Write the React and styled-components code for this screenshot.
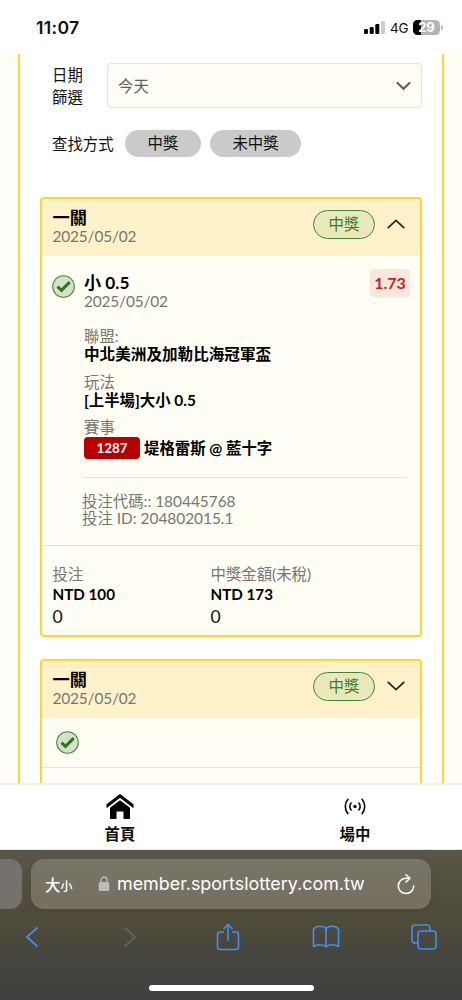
import React from "react";
import styled, { createGlobalStyle } from "styled-components";

const GlobalStyle = createGlobalStyle`
  * {
    box-sizing: border-box;
  }

  body {
    margin: 0;
    background: #fff;
    color: #111;
    font-family: Lato, "Noto Sans CJK TC", sans-serif;
    font-size: 15.4px;
  }

  svg {
    display: block;
    flex: none;
  }
`;

const Screen = styled.div`
  display: flex;
  flex-direction: column;
  width: 462px;
  height: 1000px;
  overflow: hidden;
`;

const StatusBar = styled.header`
  display: flex;
  align-items: center;
  justify-content: space-between;
  height: 54px;
  padding: 1px 19px 0 36px;
  background: #fff;
  font-family: Inter, sans-serif;
`;

const Time = styled.div`
  font-size: 17.6px;
  font-weight: 600;
  letter-spacing: 0.3px;
`;

const StatusIcons = styled.div`
  display: flex;
  align-items: center;
`;

const Network = styled.span`
  width: 18px;
  margin: 0 5px;
  font-size: 13.5px;
  font-weight: 400;
  letter-spacing: -0.3px;
  white-space: nowrap;
`;

const Battery = styled.div`
  width: 27px;
  height: 15px;
  border-radius: 4.5px;
  background: linear-gradient(90deg, #000 8px, #b4b4b4 8px);
  color: #fff;
  font-size: 13px;
  font-weight: 700;
  line-height: 15px;
  text-align: center;
`;

const BatteryTip = styled.div`
  width: 2px;
  height: 5px;
  margin-left: 1px;
  border-radius: 0 2px 2px 0;
  background: #b9b9b9;
`;

const Page = styled.main`
  flex: none;
  height: 729px;
  padding: 0 18px;
  overflow: hidden;
  background: #fffdf4;
`;

const Panel = styled.div`
  height: 760px;
  padding: 9px 20px 0;
  border: solid #ffd629;
  border-width: 0 2px;
  background: #fff;
`;

const DateFilter = styled.div`
  display: flex;
  align-items: center;
  height: 45px;
  padding-left: 12px;
`;

const DateLabel = styled.div`
  width: 55px;
  padding-right: 20px;
  line-height: 22px;
`;

const Select = styled.div`
  display: flex;
  flex: 1;
  align-items: center;
  justify-content: space-between;
  height: 45px;
  padding: 0 10px 2px;
  border: 1px solid #e3e2dc;
  border-radius: 4px;
  background: #fffdf4;
  color: #60605c;

  svg {
    margin-top: 4px;
  }
`;

const ModeFilter = styled.div`
  display: flex;
  align-items: center;
  gap: 9px;
  height: 27px;
  margin: 22px 0 40px;
  padding-left: 12px;
`;

const ModeLabel = styled.span`
  width: 64px;
  padding-bottom: 2px;
`;

const Chip = styled.span`
  width: ${(props) => props.$width}px;
  border-radius: 14px;
  background: #cacaca;
  line-height: 27px;
  text-align: center;
`;

const Card = styled.section`
  height: ${(props) => props.$height}px;
  margin-bottom: 22px;
  overflow: hidden;
  border: 2px solid #ffd629;
  border-radius: 4px;
  background: #fffdf4;
`;

const CardHeader = styled.div`
  display: flex;
  align-items: center;
  height: 57px;
  padding: 0 15px 0 10.5px;
  background: #fff2cb;
`;

const Heading = styled.div`
  flex: 1;
  padding-bottom: 2px;
`;

const Title = styled.div`
  height: 20px;
  color: #000;
  font-size: 17.2px;
  font-weight: 700;
  line-height: 20px;
`;

const Muted = styled.div`
  height: 18px;
  color: #777671;
  line-height: 18px;
`;

const SlipDate = styled(Muted)`
  height: 17px;
  letter-spacing: -0.15px;
  line-height: 17px;
`;

const WinBadge = styled.span`
  width: 62px;
  height: 29px;
  margin: -7px 12px 0 0;
  border: 1px solid #3f8737;
  border-radius: 15px;
  background: #eae7ba;
  color: #37812c;
  line-height: 27px;
  text-align: center;
`;

const ArrowBox = styled.div`
  margin-top: -8px;
`;

const CardBody = styled.div`
  display: flex;
  height: 289px;
  padding: 17px 10px 0;
`;

const Status = styled.div`
  width: 32px;
  padding-top: 2px;
`;

const Details = styled.div`
  flex: 1;
`;

const Pick = styled.div`
  display: flex;
  justify-content: space-between;
  height: 38px;
  margin-bottom: 16px;
`;

const Odds = styled.span`
  width: 40px;
  height: 28px;
  margin-top: -4px;
  border-radius: 4px;
  background: #f8e7df;
  color: #c1281e;
  font-size: 16px;
  font-weight: 700;
  line-height: 28px;
  text-align: center;
`;

const Field = styled.div`
  margin-bottom: 8.5px;
`;

const Value = styled.div`
  display: flex;
  align-items: center;
  height: ${(props) => props.$height || 19}px;
  color: #000;
  font-size: ${(props) => props.$size || 15.6}px;
  font-weight: 700;
  line-height: 19px;
  white-space: pre;
`;

const MatchNumber = styled.span`
  width: 56px;
  height: 22px;
  margin-right: 4px;
  border-radius: 4px;
  background: #b90000;
  color: #fff;
  font-size: 13.4px;
  line-height: 22px;
  text-align: center;
`;

const Codes = styled.div`
  margin: 17px 3px 0 0;
  padding-top: 15px;
  border-top: 1px solid #e4e2da;
  color: #777671;
  line-height: 17px;

  div {
    margin-left: -2px;
  }
`;

const Totals = styled.div`
  display: flex;
  padding: 19px 10px 0 10.5px;
  border-top: 1px solid #e6e4dd;
`;

const Total = styled.div`
  width: 158px;
`;

const Points = styled.div`
  height: 20px;
  margin-top: 1px;
  color: #111;
  font-size: 17.6px;
  line-height: 20px;
`;

const CollapsedBody = styled.div`
  height: 50px;
  padding: 13px 14px 0;
  border-bottom: 1px solid #e6e4dd;
`;

const TabBar = styled.nav`
  display: grid;
  grid-template-columns: 235px 235px;
  height: 67px;
  padding-left: 2.5px;
  border-top: 2px solid #efefed;
  border-bottom: 1px solid #e5e5e5;
  background: #fff;
`;

const Tab = styled.div`
  display: flex;
  flex-direction: column;
  align-items: center;
  padding-top: 8px;
  color: #111;
  font-weight: 700;
  line-height: 20px;

  svg {
    margin-bottom: 4px;
  }
`;

const Browser = styled.footer`
  flex: 1;
  padding-top: 9px;
  background: linear-gradient(#5a5749 0, #4f4c3b 56px, #4e4b39 76px, #444440 110px, #40403f 150px);
`;

const AddressRow = styled.div`
  display: flex;
  gap: 9px;
  height: 50px;
`;

const PreviousTab = styled.div`
  width: 22px;
  border-radius: 0 12px 12px 0;
  background: #74726a;
`;

const AddressBar = styled.div`
  display: flex;
  align-items: center;
  width: 400px;
  padding: 0 16px 0 14px;
  border-radius: 13px;
  background: linear-gradient(#777568, #757060);
  box-shadow: 0 1px 8px rgba(0, 0, 0, 0.08);
  color: #fff;
  font-family: Inter, "Noto Sans CJK TC", sans-serif;
`;

const TextSize = styled.span`
  width: 53px;
  font-size: 15.4px;
  font-weight: 500;

  small {
    font-size: 12px;
  }
`;

const Address = styled.span`
  flex: 1;
  margin-left: 7px;
  padding-bottom: 1px;
  font-size: 17.9px;
  white-space: nowrap;
`;

const Toolbar = styled.div`
  display: flex;
  align-items: center;
  justify-content: space-between;
  height: 34px;
  margin: 11px 24px 0 18px;

  svg {
    width: 28px;
  }
`;

const HomeIndicator = styled.div`
  width: 165px;
  height: 6px;
  margin: 31px auto 0;
  border-radius: 3px;
  background: #fff;
`;

function Arrow({ up }) {
  return (
    <ArrowBox>
      <svg width="18" height="10" viewBox="0 0 18 10" fill="none" stroke="#222" strokeWidth="1.7">
        <path d={up ? "M.7 9.200 9 1.300 17.300 9.200" : "M.7.8 9 8.700 17.300.8"} />
      </svg>
    </ArrowBox>
  );
}

function CheckIcon() {
  return (
    <svg width="23" height="23" viewBox="0 0 23 23">
      <circle cx="11.5" cy="11.5" r="10.8" fill="#d5e1cb" stroke="#4e8b43" strokeWidth="1.1" />
      <path d="m5.5 11.6 4 3.8 8.2-8.3" fill="none" stroke="#2a7818" strokeWidth="3" />
    </svg>
  );
}

function SlipHeader({ open }) {
  return (
    <CardHeader>
      <Heading>
        <Title>一關</Title>
        <SlipDate>2025/05/02</SlipDate>
      </Heading>
      <WinBadge>中獎</WinBadge>
      <Arrow up={open} />
    </CardHeader>
  );
}

export default function App() {
  return (
    <Screen>
      <GlobalStyle />
      <StatusBar>
        <Time>11:07</Time>
        <StatusIcons>
          <svg width="21" height="13" viewBox="0 0 21 13">
            <rect x="0" y="8" width="4" height="5" rx="1.2" />
            <rect x="5.7" y="6" width="4" height="7" rx="1.2" />
            <rect x="11.3" y="3" width="4" height="10" rx="1.2" />
            <rect x="17" y="0" width="4" height="13" rx="1.2" fill="#ccc" />
          </svg>
          <Network>4G</Network>
          <Battery>29</Battery>
          <BatteryTip />
        </StatusIcons>
      </StatusBar>

      <Page>
        <Panel>
          <DateFilter>
            <DateLabel>日期篩選</DateLabel>
            <Select>
              今天
              <svg width="15" height="9" viewBox="0 0 15 9" fill="none" stroke="#5b5b58" strokeWidth="2">
                <path d="m1.5 1 6 5.8 6-5.8" strokeLinecap="round" />
              </svg>
            </Select>
          </DateFilter>
          <ModeFilter>
            <ModeLabel>查找方式</ModeLabel>
            <Chip $width={76}>中獎</Chip>
            <Chip $width={91}>未中獎</Chip>
          </ModeFilter>

          <Card $height={440}>
            <SlipHeader open />
            <CardBody>
              <Status>
                <CheckIcon />
              </Status>
              <Details>
                <Pick>
                  <div>
                    <Title>小 0.5</Title>
                    <SlipDate>2025/05/02</SlipDate>
                  </div>
                  <Odds>1.73</Odds>
                </Pick>
                <Field>
                  <Muted>聯盟:</Muted>
                  <Value>中北美洲及加勒比海冠軍盃</Value>
                </Field>
                <Field>
                  <Muted>玩法</Muted>
                  <Value $size={15.4}>[上半場]大小 0.5</Value>
                </Field>
                <Field>
                  <Muted>賽事</Muted>
                  <Value $size={15.4} $height={24}>
                    <MatchNumber>1287</MatchNumber>堤格雷斯 @ 藍十字
                  </Value>
                </Field>
                <Codes>
                  <div>投注代碼:: 180445768</div>
                  <div>投注 ID: 204802015.1</div>
                </Codes>
              </Details>
            </CardBody>
            <Totals>
              <Total>
                <Muted>投注</Muted>
                <Value $size={15.2} $height={23}>NTD 100</Value>
                <Points>0</Points>
              </Total>
              <Total>
                <Muted>中獎金額(未稅)</Muted>
                <Value $size={15.2} $height={23}>NTD 173</Value>
                <Points>0</Points>
              </Total>
            </Totals>
          </Card>

          <Card $height={180}>
            <SlipHeader />
            <CollapsedBody>
              <CheckIcon />
            </CollapsedBody>
          </Card>
        </Panel>
      </Page>

      <TabBar>
        <Tab>
          <svg width="28" height="27" viewBox="0 0 28 27">
            <path d="M0.5 11.2 14 1l13.5 10.2v4L14 4.8 0.5 15.2z" />
            <path d="M4 14.7 14 7.2l10 7.5V26h-6.5v-7.5h-7V26H4z" />
          </svg>
          首頁
        </Tab>
        <Tab>
          <svg width="22" height="27" viewBox="0 0 22 27" fill="none" stroke="#111" strokeWidth="1.7">
            <circle cx="11" cy="13.500" r="1.7" fill="#111" stroke="none" />
            <path d="M7.500 9.500c-2.200 2.200-2.200 5.800 0 8M14.500 9.500c2.200 2.200 2.200 5.800 0 8" />
            <path d="M4.300 5.800c-4 4.500-4 10.900 0 15.400M17.700 5.800c4 4.500 4 10.900 0 15.400" />
          </svg>
          場中
        </Tab>
      </TabBar>

      <Browser>
        <AddressRow>
          <PreviousTab />
          <AddressBar>
            <TextSize>
              大<small>小</small>
            </TextSize>
            <svg width="12" height="16" viewBox="0 0 12 16">
              <rect x="0.7" y="6" width="10.6" height="9" rx="1.5" fill="#bebdb9" />
              <path d="M3 7V4a3 3 0 0 1 6 0v3" fill="none" stroke="#bebdb9" strokeWidth="1.3" />
            </svg>
            <Address>member.sportslottery.com.tw</Address>
            <svg width="18" height="21" viewBox="0 0 18 21" fill="none" stroke="#fff" strokeWidth="1.5">
              <path d="M12.5 4.2H9a7.7 7.7 0 1 0 7.7 7.7" strokeLinecap="round" />
              <path d="m9 .7 4 3.5-4 3.7" strokeLinecap="round" strokeLinejoin="round" />
            </svg>
          </AddressBar>
        </AddressRow>
        <Toolbar>
          <svg height="22" viewBox="0 0 14 22" fill="none" stroke="#438df7" strokeWidth="1.8">
            <path d="M12.5 1.5 2 11l10.5 9.5" />
          </svg>
          <svg height="22" viewBox="0 0 14 22" fill="none" stroke="#65635a" strokeWidth="1.7">
            <path d="M1.5 1.5 12 11 1.5 20.5" />
          </svg>
          <svg height="28" viewBox="0 0 24 28" fill="none" stroke="#438df7" strokeWidth="1.6">
            <path d="M8 9H4a2.5 2.5 0 0 0-2.5 2.5V24A2.5 2.5 0 0 0 4 26.5h16a2.5 2.5 0 0 0 2.500-2.500V11.500A2.500 2.500 0 0 0 20 9h-4" />
            <path d="M12 18V1.5M7.500 6 12 1.500 16.500 6" />
          </svg>
          <svg height="24" viewBox="0 0 28 24" fill="none" stroke="#438df7" strokeWidth="1.6">
            <path d="M14 22c-2.500-3-9-3-12.500-.5V4C4.500.5 11.500.5 14 3.500 16.500.5 23.500.5 26.500 4v17.500C23 19 16.500 19 14 22zM14 3.500V22" strokeLinejoin="round" />
          </svg>
          <svg height="26" viewBox="0 0 26 26" fill="none" stroke="#438df7" strokeWidth="1.6">
            <rect x="7" y="7" width="18" height="18" rx="3" />
            <path d="M7 19H4a3 3 0 0 1-3-3V4a3 3 0 0 1 3-3h12a3 3 0 0 1 3 3v3" />
          </svg>
        </Toolbar>
        <HomeIndicator />
      </Browser>
    </Screen>
  );
}
